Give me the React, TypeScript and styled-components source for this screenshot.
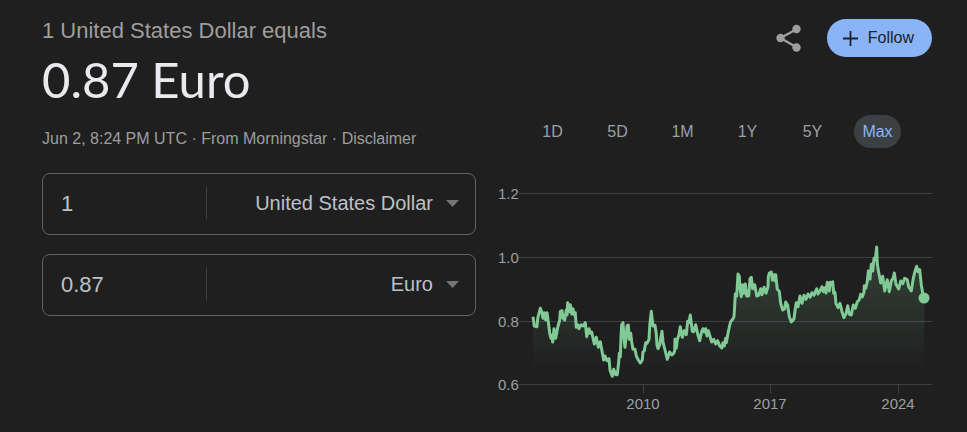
import React, { useState } from "react";
import styled, { createGlobalStyle } from "styled-components";

const GlobalStyle = createGlobalStyle`
  * { box-sizing: border-box; }
  body {
    margin: 0;
    background: #1f1f1f;
    color: #bdc1c6;
    font-family: "Liberation Sans", Arial, sans-serif;
  }
  button, input, select { font: inherit; color: inherit; }
`;

const Page = styled.main`
  display: grid;
  grid-template-columns: 1fr 1fr;
  column-gap: 22px;
  padding: 18px 35px 16px 42px;
`;

const Column = styled.section`
  min-width: 0;
  display: flex;
  flex-direction: column;
`;

const Equation = styled.div`
  color: #9e9e9e;
  font-size: 22px;
  line-height: 26px;
  white-space: nowrap;
`;

const Result = styled.h1`
  margin: 6px 0 0;
  color: #e8eaed;
  font-family: Lato, sans-serif;
  font-size: 49px;
  font-weight: 400;
  line-height: 58px;
  white-space: nowrap;
`;

const Source = styled.div`
  margin-top: 21px;
  color: #9e9e9e;
  font-size: 16px;
  line-height: 20px;
  white-space: nowrap;
`;

const SourceLink = styled.a`
  color: inherit;
  text-decoration: none;
`;

const Converter = styled.form`
  display: flex;
  flex-direction: column;
  gap: 19px;
  margin-top: 24px;
`;

const Field = styled.div`
  display: flex;
  align-items: center;
  height: 62px;
  padding-bottom: 2px;
  border: 1px solid #5f6368;
  border-radius: 8px;
`;

const Amount = styled.input`
  width: 38%;
  min-width: 0;
  height: 32px;
  padding: 2px 0 0 18px;
  border: 0;
  border-right: 1px solid #3c4043;
  outline: 0;
  background: transparent;
  font-size: 22px;
`;

const CurrencyBox = styled.div`
  flex: 1;
  min-width: 0;
  display: flex;
  align-items: center;
  padding-right: 16px;
`;

const Currency = styled.select`
  flex: 1;
  min-width: 0;
  height: 32px;
  padding: 0 13px 0 0;
  border: 0;
  outline: 0;
  appearance: none;
  background: transparent;
  font-size: 20px;
  text-align-last: right;
  option { background: #303134; }
`;

const Actions = styled.div`
  display: flex;
  justify-content: flex-end;
  align-items: center;
  gap: 24px;
  margin-top: 1px;
`;

const IconButton = styled.button`
  display: flex;
  padding: 0;
  border: 0;
  background: none;
  color: #9e9e9e;
  cursor: pointer;
`;

const FollowButton = styled.button`
  display: flex;
  align-items: center;
  gap: 10px;
  height: 38px;
  padding: 0 18px 0 16px;
  border: 0;
  border-radius: 19px;
  background: #8ab4f8;
  color: #202124;
  font-size: 16px;
  cursor: pointer;
`;

const Ranges = styled.div`
  display: flex;
  margin: 58px 22px 0;
`;

const RangeCell = styled.div`
  flex: 1;
  display: flex;
  justify-content: center;
`;

const RangeButton = styled.button<{ $active: boolean }>`
  height: 33px;
  padding: 0 8px;
  border: 0;
  border-radius: 17px;
  background: ${(p) => (p.$active ? "#3c4043" : "transparent")};
  color: ${(p) => (p.$active ? "#8ab4f8" : "#9aa0a6")};
  font-size: 16px;
  cursor: pointer;
`;

const Chart = styled.svg`
  display: block;
  width: 100%;
  margin-top: 32px;
  font-size: 15px;
`;

const AxisText = styled.text`
  fill: #9aa0a6;
`;

type Point = [number, number];

const runs: { x: number; y: number; points: Point[] }[] = [
  {
    x: 27, y: 110,
    points: [[24, 80], [28, 108], [36, 110], [38, 85], [42, 70], [46, 55], [50, 65], [54, 85], [58, 68], [62, 90], [66, 68], [70, 95], [74, 130], [78, 145], [80, 135], [83, 156], [87, 116], [92, 145], [98, 112], [104, 90], [106, 64], [111, 62], [114, 85], [119, 90], [124, 60], [126, 75], [128, 38], [132, 65], [136, 44], [140, 72], [144, 56], [148, 75], [151, 68], [154, 112], [158, 104], [162, 116], [168, 104], [174, 108], [181, 98], [185, 140], [192, 116], [196, 130], [200, 126], [208, 162], [214, 142], [220, 172], [226, 155], [232, 188], [236, 210], [240, 198], [246, 212], [252, 206], [255, 240], [262, 259], [266, 238], [272, 254], [277, 254], [281, 216], [283, 190], [286, 200], [288, 140], [290, 104], [294, 98], [297, 145], [300, 172], [304, 135], [306, 108]],
  },
  {
    x: 127, y: 110,
    points: [[10, 105], [13, 148], [17, 130], [20, 155], [24, 178], [30, 178], [34, 198], [40, 210], [46, 219], [52, 210], [54, 186], [58, 182], [62, 158], [66, 160], [72, 148], [74, 110], [76, 90], [79, 64], [84, 108], [90, 106], [94, 132], [96, 165], [99, 176], [104, 165], [107, 145], [111, 124], [114, 156], [120, 180], [127, 208], [134, 186], [140, 195], [146, 190], [149, 182], [150, 148], [154, 174], [157, 148], [162, 134], [166, 110], [172, 142], [178, 122], [184, 134], [188, 94], [192, 98], [196, 75], [202, 124], [206, 125], [212, 104], [218, 132], [224, 152], [230, 124], [234, 116], [238, 126], [242, 116], [246, 138], [250, 122], [254, 136], [260, 156], [266, 148], [272, 162], [278, 152], [284, 168], [290, 174], [294, 158], [298, 168], [302, 145], [304, 158], [310, 125], [315, 102], [318, 94]],
  },
  {
    x: 222, y: 70,
    points: [[38, 208], [42, 200], [44, 166], [46, 132], [50, 138], [54, 72], [58, 78], [60, 115], [64, 140], [68, 104], [72, 130], [76, 102], [80, 138], [86, 138], [90, 86], [94, 82], [98, 116], [104, 104], [110, 138], [116, 136], [122, 116], [126, 134], [132, 112], [138, 130], [144, 110], [145, 80], [148, 70], [154, 66], [157, 90], [162, 74], [164, 92], [167, 74], [172, 118], [178, 124], [182, 160], [188, 180], [194, 176], [197, 156], [203, 166], [208, 200], [214, 216], [222, 206], [226, 175], [229, 158], [234, 170], [240, 138], [246, 160], [252, 136], [258, 148], [264, 132], [270, 142], [276, 128], [282, 136], [290, 116], [294, 132]],
  },
  {
    x: 322, y: 55,
    points: [[0, 168], [6, 155], [10, 170], [14, 158], [18, 174], [22, 142], [28, 168], [31, 142], [36, 148], [38, 140], [41, 175], [45, 172], [48, 206], [54, 218], [60, 205], [66, 230], [72, 248], [78, 236], [83, 212], [88, 238], [94, 240], [100, 210], [106, 220], [112, 200], [118, 194], [122, 178], [127, 186], [132, 172], [133, 152], [137, 160], [142, 140], [145, 108], [150, 132], [154, 88], [158, 108], [162, 70], [166, 75], [170, 36], [172, 88], [176, 112], [182, 144], [188, 124], [194, 168], [202, 134], [208, 170], [214, 138], [220, 128], [223, 114], [228, 148], [236, 162], [242, 138], [248, 146], [254, 130], [262, 134], [266, 156], [274, 168], [280, 130], [284, 112], [290, 94], [294, 110], [299, 104], [304, 150], [308, 174], [313, 189]],
  },
];

const path = runs
  .flatMap((r) => r.points.map(([x, y]) => `${(r.x + x / 3).toFixed(1)},${(r.y + y / 3).toFixed(1)}`))
  .join("L");

const gridLines = [
  { label: "1.2", y: 14 },
  { label: "1.0", y: 78 },
  { label: "0.8", y: 142 },
  { label: "0.6", y: 205 },
];

const years = [
  { label: "2010", x: 145 },
  { label: "2017", x: 272 },
  { label: "2024", x: 400 },
];

const Caret = () => (
  <svg width="13" height="7" viewBox="0 0 13 7" aria-hidden="true">
    <path d="M0 0h13L6.5 7z" fill="#757575" />
  </svg>
);

const currencies = ["United States Dollar", "Euro"];
const ranges = ["1D", "5D", "1M", "1Y", "5Y", "Max"];

function CurrencyField({ name, amount, currency }: { name: string; amount: string; currency: string }) {
  return (
    <Field>
      <Amount aria-label={`${name} amount`} defaultValue={amount} inputMode="decimal" />
      <CurrencyBox>
        <Currency aria-label={`${name} currency`} defaultValue={currency}>
          {currencies.map((c) => (
            <option key={c}>{c}</option>
          ))}
        </Currency>
        <Caret />
      </CurrencyBox>
    </Field>
  );
}

function RateChart() {
  return (
    <Chart viewBox="0 0 434 236" role="img" aria-label="Dollar to euro exchange rate">
      <defs>
        <linearGradient id="fade" gradientUnits="userSpaceOnUse" x1="0" y1="66" x2="0" y2="190">
          <stop offset="0" stopColor="#81c995" stopOpacity="0.22" />
          <stop offset="1" stopColor="#81c995" stopOpacity="0" />
        </linearGradient>
      </defs>
      {gridLines.map((g) => (
        <g key={g.label}>
          <rect x="21" y={g.y - 1} width="413" height="1" fill="#3c4043" />
          <AxisText x="0" y={g.y + 5}>{g.label}</AxisText>
        </g>
      ))}
      {years.map((t) => (
        <g key={t.label}>
          <rect x={t.x} y="205" width="1" height="9" fill="#3c4043" />
          <AxisText x={t.x} y="229" textAnchor="middle">{t.label}</AxisText>
        </g>
      ))}
      <path d={`M${path}V205H35Z`} fill="url(#fade)" />
      <path d={`M${path}`} fill="none" stroke="#81c995" strokeWidth="3" strokeLinejoin="round" />
      <circle cx="426" cy="118" r="5.5" fill="#81c995" />
    </Chart>
  );
}

export default function App() {
  const [range, setRange] = useState("Max");
  return (
    <>
      <GlobalStyle />
      <Page>
        <Column>
          <Equation>1 United States Dollar equals</Equation>
          <Result>0.87 Euro</Result>
          <Source>
            Jun 2, 8:24 PM UTC · From Morningstar · <SourceLink href="#disclaimer">Disclaimer</SourceLink>
          </Source>
          <Converter>
            <CurrencyField name="From" amount="1" currency="United States Dollar" />
            <CurrencyField name="To" amount="0.87" currency="Euro" />
          </Converter>
        </Column>
        <Column>
          <Actions>
            <IconButton aria-label="Share">
              <svg width="28" height="28" viewBox="0 0 28 28">
                <path d="M22 5 5.500 14 22 23.500" fill="none" stroke="currentColor" strokeWidth="2.400" />
                <circle cx="21.500" cy="5" r="4.200" fill="currentColor" />
                <circle cx="5.500" cy="14" r="4.200" fill="currentColor" />
                <circle cx="21.500" cy="23.500" r="4.200" fill="currentColor" />
              </svg>
            </IconButton>
            <FollowButton>
              <svg width="15" height="15" viewBox="0 0 15 15" aria-hidden="true">
                <path d="M7.500 0v15M0 7.500h15" stroke="currentColor" strokeWidth="1.800" />
              </svg>
              Follow
            </FollowButton>
          </Actions>
          <Ranges>
            {ranges.map((r) => (
              <RangeCell key={r}>
                <RangeButton $active={r === range} aria-pressed={r === range} onClick={() => setRange(r)}>
                  {r}
                </RangeButton>
              </RangeCell>
            ))}
          </Ranges>
          <RateChart />
        </Column>
      </Page>
    </>
  );
}
